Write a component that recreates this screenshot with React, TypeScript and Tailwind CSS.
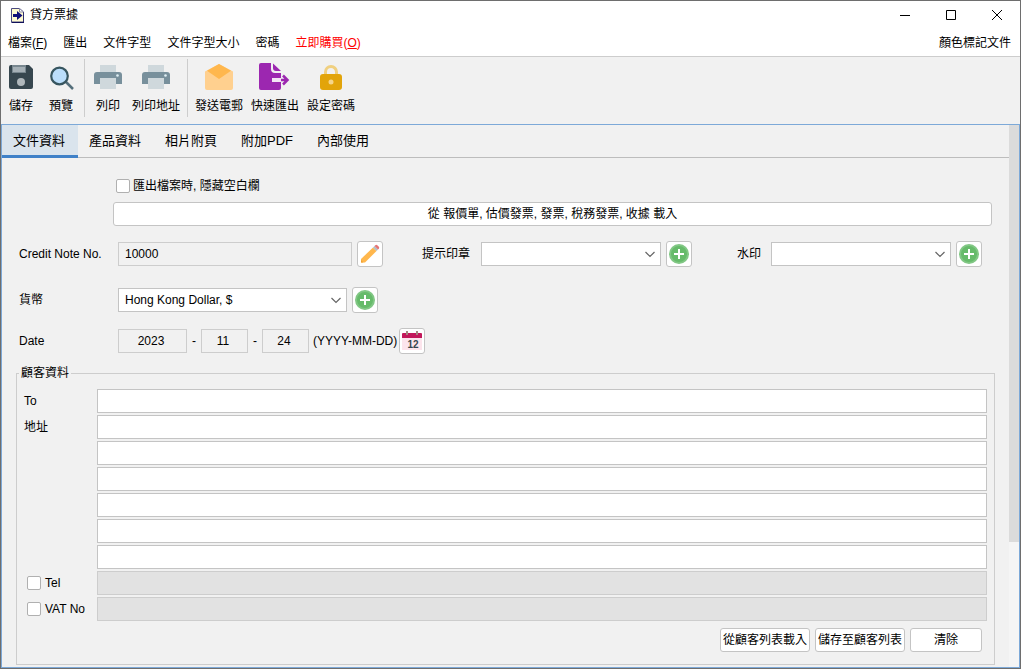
import { useState, type ReactNode } from "react";

const MENUS = ["匯出", "文件字型", "文件字型大小", "密碼"];

const TABS = ["文件資料", "產品資料", "相片附頁", "附加PDF", "內部使用"];

const ADDRESS_LINES = [1, 2, 3, 4, 5, 6];

const AppIcon = () => (
  <svg width="13" height="16" viewBox="0 0 13 16" aria-hidden="true">
    <path d="M.5 1.500h8l4 3.500v10H.5z" fill="#fffbd0" stroke="#4a4a80" />
    <path d="M8.500 1.500V5h4z" fill="#fff" stroke="#8a8aa8" />
    <path d="M2 7h4V4l5.500 4.500L6 13v-3H2z" fill="#10107a" />
    <path d="M.5 15.500h12.500V5" fill="none" stroke="#10105a" />
  </svg>
);

const SaveIcon = () => (
  <svg width="28" height="28" viewBox="0 0 28 28" aria-hidden="true">
    <path d="M4 2h18l4 4v18a2 2 0 0 1-2 2H4a2 2 0 0 1-2-2V4a2 2 0 0 1 2-2z" fill="#37474f" />
    <path d="M5 2h14v8H5z" fill="#78878f" />
    <path d="M6 4h12v5H6z" fill="#a5b0b6" />
    <circle cx="14" cy="19" r="4" fill="#b0b8bc" />
  </svg>
);

const SearchIcon = () => (
  <svg width="28" height="28" viewBox="0 0 28 28" aria-hidden="true">
    <path d="M18 18l8 8" stroke="#546e7a" strokeWidth="2.500" />
    <circle cx="12.500" cy="13" r="8.300" fill="#bbdefb" stroke="#37555f" strokeWidth="2.200" />
  </svg>
);

const PrintIcon = () => (
  <svg width="28" height="28" viewBox="0 0 28 28" aria-hidden="true">
    <path d="M6 2h16v8H6z" fill="#cfd8dc" />
    <path d="M3 9h22a3 3 0 0 1 3 3v9H0v-9a3 3 0 0 1 3-3z" fill="#78909c" />
    <circle cx="23.500" cy="12.500" r="1.300" fill="#e0f0f5" />
    <path d="M6 15h16v11H6z" fill="#cfd8dc" />
  </svg>
);

const MailIcon = () => (
  <svg width="28" height="28" viewBox="0 0 28 28" aria-hidden="true">
    <path d="M0 8.500L14 1l14 7.500V25a2 2 0 0 1-2 2H2a2 2 0 0 1-2-2z" fill="#ffd08f" />
    <path d="M2 7.800L14 1l12 6.800L14 16z" fill="#ffb74d" />
  </svg>
);

const ExportIcon = () => (
  <svg width="32" height="28" viewBox="0 0 32 28" aria-hidden="true">
    <path d="M2 0h10v6a4 4 0 0 0 4 4h6v15a2 2 0 0 1-2 2H2a2 2 0 0 1-2-2V2a2 2 0 0 1 2-2z" fill="#9c27b0" />
    <path d="M14 .5L22 8h-5a3 3 0 0 1-3-3z" fill="#9c27b0" />
    <path d="M13 15h9v4h-9z" fill="#f3e5f5" />
    <path d="M22 17h6M24 12.500l4.500 4.500-4.500 4.500" fill="none" stroke="#9c27b0" strokeWidth="2.500" />
  </svg>
);

const LockIcon = () => (
  <svg width="28" height="28" viewBox="0 0 28 28" aria-hidden="true">
    <path d="M8.500 12V9a5.500 5.500 0 0 1 11 0v3" fill="none" stroke="#f0d080" strokeWidth="3" />
    <rect x="3" y="11" width="22" height="16" rx="3" fill="#e2a40a" />
    <circle cx="14" cy="19" r="2.500" fill="#f5d58a" />
  </svg>
);

const PencilIcon = () => (
  <svg width="20" height="20" viewBox="0 0 20 20" aria-hidden="true">
    <path d="M1 15L13 3.500l3.500 3.500L5 18.500H1z" fill="#ffb74d" />
    <path d="M13 3.500l1.500-1.500L18 5.500 16.500 7z" fill="#b0bec5" />
    <path d="M14.500 2l.8-.8a1.500 1.500 0 0 1 2 0l1.500 1.500a1.500 1.500 0 0 1 0 2l-.8.8z" fill="#e57373" />
    <path d="M1 16v2.500h2.500z" fill="#f0a030" />
  </svg>
);

const PlusIcon = () => (
  <svg width="20" height="20" viewBox="0 0 20 20" aria-hidden="true">
    <circle cx="10" cy="10" r="9" fill="#66bb6a" stroke="#81c784" strokeWidth="2" />
    <path d="M10 5v10M5 10h10" stroke="#fff" strokeWidth="2" />
  </svg>
);

const CalendarIcon = () => (
  <svg width="20" height="20" viewBox="0 0 20 20" aria-hidden="true">
    <path d="M0 6h20v13H0z" fill="#fce4ec" />
    <path d="M0 3a1 1 0 0 1 1-1h18a1 1 0 0 1 1 1v4H0z" fill="#c2185b" />
    <path d="M4 0h2v4H4zM14 0h2v4h-2z" fill="#a1887f" />
    <text
      x="11"
      y="17"
      textAnchor="middle"
      fontSize="10"
      fontWeight="bold"
      fontFamily="Liberation Sans, sans-serif"
      fill="#37474f"
    >
      12
    </text>
  </svg>
);

const Chevron = () => (
  <svg
    className="pointer-events-none absolute right-[6px] top-[9px]"
    width="10"
    height="7"
    viewBox="0 0 10 7"
    aria-hidden="true"
  >
    <path d="M.5 1L5 5.500 9.500 1" fill="none" stroke="#666" strokeWidth="1.200" />
  </svg>
);

const ToolButton = ({ label, icon, width }: { label: string; icon: ReactNode; width: string }) => (
  <button type="button" className={`flex flex-col items-center gap-[7px] pt-[6px] whitespace-nowrap ${width}`}>
    {icon}
    <span className="leading-[16px]">{label}</span>
  </button>
);

const IconButton = ({ label, children }: { label: string; children: ReactNode }) => (
  <button
    type="button"
    aria-label={label}
    className="flex size-[26px] shrink-0 items-center justify-center rounded-[3px] border border-[#c4c4c4] bg-white"
  >
    {children}
  </button>
);

const SelectBox = ({ id, width, option }: { id: string; width: string; option?: string }) => (
  <div className={`relative shrink-0 ${width}`}>
    <select id={id} className="block h-6 w-full appearance-none border border-[#c4c4c4] bg-white px-[6px]">
      <option>{option}</option>
    </select>
    <Chevron />
  </div>
);

const CheckBox = ({ id }: { id: string }) => (
  <input
    type="checkbox"
    id={id}
    className="size-[14px] shrink-0 appearance-none rounded-[2px] border border-[#b0b0b0] bg-white checked:bg-[#3f81c8]"
  />
);

const DateField = ({ label, value, width }: { label: string; value: string; width: string }) => (
  <input
    aria-label={label}
    readOnly
    value={value}
    className={`h-6 border border-[#cdcdcd] bg-[#f1f1f1] pr-[3px] text-center ${width}`}
  />
);

const App = () => {
  const [tab, setTab] = useState(0);

  return (
    <div className="flex min-h-screen flex-col border border-[#6e6e6e] bg-[#f1f1f1] font-['Liberation_Sans','Noto_Sans_CJK_TC',sans-serif] text-[12px] text-black">
      <header className="border-b border-[#cdcdcd] bg-white">
        <div className="flex h-7 items-center justify-between pl-[10px] pr-[17px]">
          <div className="flex items-center gap-[6px]">
            <AppIcon />
            <h1>貸方票據</h1>
          </div>
          <div className="flex gap-[34px]">
            <button type="button" aria-label="最小化">
              <svg width="12" height="12" viewBox="0 0 12 12">
                <path d="M1 6.500h10" stroke="#000" />
              </svg>
            </button>
            <button type="button" aria-label="最大化">
              <svg width="12" height="12" viewBox="0 0 12 12">
                <path d="M1.500 1.500h9v9h-9z" fill="none" stroke="#000" />
              </svg>
            </button>
            <button type="button" aria-label="關閉">
              <svg width="12" height="12" viewBox="0 0 12 12">
                <path d="M1 1l10 10M11 1L1 11" stroke="#000" />
              </svg>
            </button>
          </div>
        </div>
        <nav className="flex h-[27px] items-center gap-4 pl-[7px] pr-[9px]">
          <button type="button">
            檔案(<u>F</u>)
          </button>
          {MENUS.map((menu) => (
            <button key={menu} type="button">
              {menu}
            </button>
          ))}
          <button type="button" className="text-[#ff0000]">
            立即購買(<u>O</u>)
          </button>
          <button type="button" className="ml-auto">
            顏色標記文件
          </button>
        </nav>
      </header>

      <div className="flex h-[67px] pl-[6px]">
        <ToolButton label="儲存" icon={<SaveIcon />} width="w-[28px]" />
        <ToolButton label="預覽" icon={<SearchIcon />} width="ml-3 w-[28px]" />
        <div className="mx-[9px] mt-[2px] mb-[7px] w-px bg-[#cdcdcd]" />
        <ToolButton label="列印" icon={<PrintIcon />} width="w-[28px]" />
        <ToolButton label="列印地址" icon={<PrintIcon />} width="ml-2 w-[52px]" />
        <div className="mx-[5px] mt-[2px] mb-[7px] w-px bg-[#cdcdcd]" />
        <ToolButton label="發送電郵" icon={<MailIcon />} width="w-[52px]" />
        <ToolButton label="快速匯出" icon={<ExportIcon />} width="ml-1 w-[52px]" />
        <ToolButton label="設定密碼" icon={<LockIcon />} width="ml-1 w-[52px]" />
      </div>

      <div className="flex flex-1 border border-[#7da9d8]">
        <div className="flex min-w-0 flex-1 flex-col">
          <div role="tablist" className="flex h-[33px] border-b border-[#bdbdbd] text-[13px]">
            {TABS.map((title, idx) => (
              <button
                key={title}
                type="button"
                role="tab"
                aria-selected={tab === idx}
                onClick={() => setTab(idx)}
                className={`h-[33px] w-[76px] border-b-3 pt-[2px] pr-[2px] ${
                  tab === idx ? "border-[#3f81c8] bg-[#dae4ed]" : "border-transparent"
                }`}
              >
                {title}
              </button>
            ))}
          </div>

          <main className="flex flex-1 flex-col px-[14px] pt-5 pb-[2px]">
            <div className="flex h-4 items-center gap-[3px] pl-[100px]">
              <CheckBox id="hide-empty" />
              <label htmlFor="hide-empty">匯出檔案時, 隱藏空白欄</label>
            </div>
            <button
              type="button"
              className="mt-2 mr-[3px] ml-[97px] h-6 rounded-[3px] border border-[#c4c4c4] bg-white"
            >
              從 報價單, 估價發票, 發票, 稅務發票, 收據 載入
            </button>

            <div className="mt-[15px] flex items-center pr-[13px] pl-[3px]">
              <label htmlFor="note-no" className="w-[99px] shrink-0">
                Credit Note No.
              </label>
              <input
                id="note-no"
                readOnly
                value="10000"
                className="mr-[5px] h-6 w-[234px] min-w-0 border border-[#cdcdcd] bg-[#f1f1f1] px-[6px]"
              />
              <IconButton label="編輯">
                <PencilIcon />
              </IconButton>
              <div className="ml-auto flex items-center">
                <label htmlFor="stamp" className="mr-[11px]">
                  提示印章
                </label>
                <SelectBox id="stamp" width="mr-[5px] w-[180px]" />
                <IconButton label="新增提示印章">
                  <PlusIcon />
                </IconButton>
                <label htmlFor="watermark" className="mr-[10px] ml-[45px]">
                  水印
                </label>
                <SelectBox id="watermark" width="mr-[5px] w-[180px]" />
                <IconButton label="新增水印">
                  <PlusIcon />
                </IconButton>
              </div>
            </div>

            <div className="mt-5 flex items-center pl-[3px]">
              <label htmlFor="currency" className="w-[99px]">
                貨幣
              </label>
              <SelectBox id="currency" width="mr-[5px] w-[229px]" option="Hong Kong Dollar, $" />
              <IconButton label="新增貨幣">
                <PlusIcon />
              </IconButton>
            </div>

            <div className="mt-[15px] flex items-center pl-[3px]">
              <span className="w-[99px]">Date</span>
              <DateField label="Year" value="2023" width="w-[69px]" />
              <span className="w-[14px] text-center">-</span>
              <DateField label="Month" value="11" width="w-[47px]" />
              <span className="w-[14px] text-center">-</span>
              <DateField label="Day" value="24" width="w-[47px]" />
              <span className="mr-[2px] ml-1">(YYYY-MM-DD)</span>
              <IconButton label="日曆">
                <CalendarIcon />
              </IconButton>
            </div>

            <fieldset className="mt-[10px] flex-1 border border-[#cdcdcd] px-[7px] pb-3">
              <legend className="-ml-[5px] px-[2px] leading-[18px]">顧客資料</legend>
              <div className="mt-[7px] grid grid-cols-[73px_1fr] items-center gap-y-[2px]">
                <label htmlFor="to">To</label>
                <input id="to" className="h-6 border border-[#c4c4c4] bg-white px-[6px]" />
                {ADDRESS_LINES.map((line) => (
                  <div key={line} className="contents">
                    <label htmlFor={`address-${line}`}>{line === 1 ? "地址" : ""}</label>
                    <input id={`address-${line}`} className="h-6 border border-[#c4c4c4] bg-white px-[6px]" />
                  </div>
                ))}
                <div className="flex items-center gap-1 pl-[3px]">
                  <CheckBox id="use-tel" />
                  <label htmlFor="use-tel">Tel</label>
                </div>
                <input aria-label="Tel" disabled className="h-6 border border-[#cdcdcd] bg-[#e2e2e2]" />
                <div className="flex items-center gap-1 pl-[3px]">
                  <CheckBox id="use-vat" />
                  <label htmlFor="use-vat">VAT No</label>
                </div>
                <input aria-label="VAT No" disabled className="h-6 border border-[#cdcdcd] bg-[#e2e2e2]" />
              </div>
              <div className="mt-[7px] flex justify-end gap-[5px] pr-[5px]">
                <button
                  type="button"
                  className="h-6 w-[90px] rounded-[3px] border border-[#c4c4c4] bg-white whitespace-nowrap"
                >
                  從顧客列表載入
                </button>
                <button
                  type="button"
                  className="h-6 w-[90px] rounded-[3px] border border-[#c4c4c4] bg-white whitespace-nowrap"
                >
                  儲存至顧客列表
                </button>
                <button type="button" className="h-6 w-[72px] rounded-[3px] border border-[#c4c4c4] bg-white">
                  清除
                </button>
              </div>
            </fieldset>
          </main>
        </div>

        {/* scroll bar */}
        <div className="flex w-[10px] shrink-0 flex-col bg-[#f5f5f5]">
          <div className="h-[77%] bg-[#dbdbdb]" />
        </div>
      </div>
    </div>
  );
};

export default App;
